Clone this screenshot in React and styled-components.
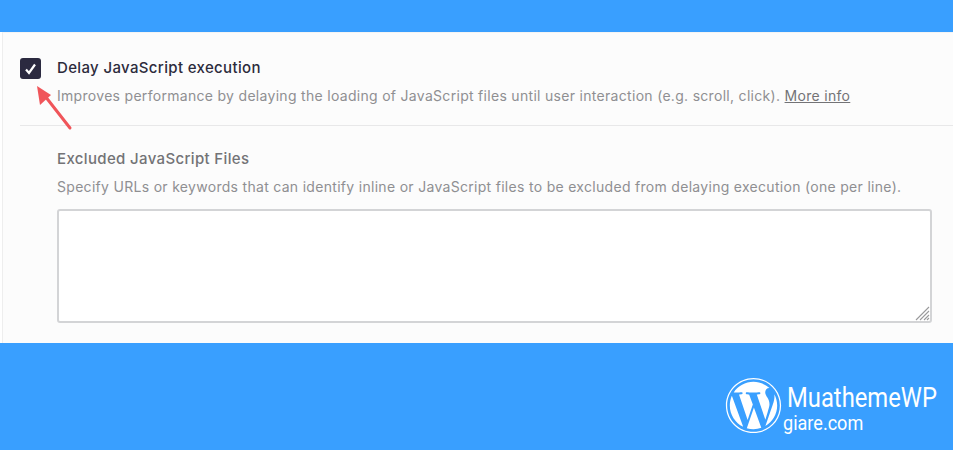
import styled, { createGlobalStyle } from 'styled-components';
import { FaWordpress } from 'react-icons/fa';

const GlobalStyle = createGlobalStyle`
  html, body {
    margin: 0;
    padding: 0;
    background: #fff;
  }
`;

const Page = styled.div`
  display: flex;
  flex-direction: column;
  width: 953px;
  height: 450px;
  overflow: hidden;
  font-family: Inter, "Liberation Sans", sans-serif;
`;

const TopBand = styled.div`
  height: 32px;
  flex: none;
  background: #399fff;
`;

const Panel = styled.div`
  position: relative;
  flex: 1;
  margin-left: 2px;
  padding: 2px 0 0 17px;
  background: #fcfcfc;
  border-left: 1px solid #eeeeee;
  border-top: 1px solid #f4f4f4;
  box-sizing: border-box;
`;

const OptionRow = styled.div`
  display: flex;
  gap: 16px;
  padding: 24px 0 20px;
  border-bottom: 1px solid #e8e8e9;
`;

const Check = styled.div`
  flex: none;
  width: 21px;
  height: 21px;
  margin-top: -1px;
  border-radius: 3px;
  background: #2b2a40;
  display: flex;
  align-items: center;
  justify-content: center;
`;

const OptionText = styled.div`
  display: flex;
  flex-direction: column;
  gap: 10px;
`;

const Title = styled.div`
  font-size: 15px;
  line-height: 18px;
  font-weight: 500;
  letter-spacing: 0.35px;
  color: ${(p) => (p.$muted ? '#737376' : '#2c2b3c')};
  white-space: nowrap;
`;

const Desc = styled.div`
  font-size: 14px;
  line-height: 18px;
  letter-spacing: 0.3px;
  color: #8f8f92;
  white-space: nowrap;
`;

const MoreInfo = styled.span`
  color: #737376;
  text-decoration: underline;
`;

const Excluded = styled.div`
  display: flex;
  flex-direction: column;
  padding: 24px 21px 0 37px;
`;

const ExcludedDesc = styled(Desc)`
  margin-top: 10px;
`;

const TextBox = styled.div`
  position: relative;
  height: 114px;
  margin-top: 13px;
  background: #fff;
  border: 2px solid #d3d4d6;
  border-radius: 3px;
  box-sizing: border-box;
`;

const Grip = styled.svg`
  position: absolute;
  right: 0;
  bottom: 0;
`;

const Arrow = styled.svg`
  position: absolute;
  left: 30px;
  top: 52px;
`;

const Footer = styled.div`
  flex: none;
  height: 107px;
  background: #399fff;
  display: flex;
  justify-content: flex-end;
  align-items: center;
  gap: 5px;
  padding: 17px 16px 0 0;
  box-sizing: border-box;
  color: #fff;
`;

const Brand = styled.div`
  display: flex;
  flex-direction: column;
  width: 150px;
  padding-top: 6px;
  font-family: Roboto, "Liberation Sans", sans-serif;
  white-space: nowrap;
`;

const BrandName = styled.div`
  font-size: 28px;
  line-height: 30px;
  transform: scaleX(0.85);
  transform-origin: left;
`;

const BrandSite = styled.div`
  font-size: 21px;
  line-height: 21px;
  margin-left: -4px;
  transform: scaleX(0.86);
  transform-origin: left;
`;

export default function App() {
  return (
    <Page>
      <GlobalStyle />
      <TopBand />
      <Panel>
        <OptionRow>
          <Check>
            <svg width="13" height="12" viewBox="0 0 13 12">
              <path d="M2 6.5 L5 10 L11 1.5" fill="none" stroke="#fff" strokeWidth="2.2" />
            </svg>
          </Check>
          <OptionText>
            <Title>Delay JavaScript execution</Title>
            <Desc>
              Improves performance by delaying the loading of JavaScript files until user interaction (e.g. scroll, click).{' '}
              <MoreInfo>More info</MoreInfo>
            </Desc>
          </OptionText>
        </OptionRow>
        <Excluded>
          <Title $muted>Excluded JavaScript Files</Title>
          <ExcludedDesc>
            Specify URLs or keywords that can identify inline or JavaScript files to be excluded from delaying execution (one per line).
          </ExcludedDesc>
          <TextBox>
            <Grip width="16" height="16" viewBox="0 0 16 16">
              <path d="M15 2 L2 15 M15 6 L6 15 M15 10 L10 15 M15 13 L13 15" stroke="#9a9a9c" strokeWidth="1.1" />
            </Grip>
          </TextBox>
        </Excluded>
        <Arrow width="44" height="50" viewBox="0 0 44 50">
          <path d="M37 43 L12 11" stroke="#f0555a" strokeWidth="3" strokeLinecap="round" />
          <path d="M4 1 L18 10 L7 20 Z" fill="#f0555a" />
        </Arrow>
      </Panel>
      <Footer>
        <FaWordpress size={57} />
        <Brand>
          <BrandName>MuathemeWP</BrandName>
          <BrandSite>giare.com</BrandSite>
        </Brand>
      </Footer>
    </Page>
  );
}
